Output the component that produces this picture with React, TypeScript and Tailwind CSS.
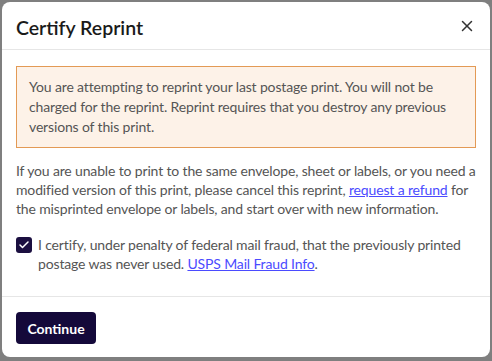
import { X, Check } from 'lucide-react';

export default function App() {
  return (
    <div className="h-[361px] w-[492px] bg-[#7f7f7f] px-[2px] pt-[2px] pb-[4px] font-['Lato',sans-serif]">
      <div className="flex h-full flex-col rounded-lg bg-white">
        {/* header */}
        <div className="flex h-[48px] shrink-0 items-center justify-between border-b border-[#e6e6e6] pl-[14px] pr-[14px]">
          <h2 className="pt-[4px] text-[19.5px] font-semibold text-[#1a1a1a]">Certify Reprint</h2>
          <button className="text-[#333]">
            <X className="h-[18px] w-[18px]" strokeWidth={2} />
          </button>
        </div>

        {/* body */}
        <div className="flex-1 px-[14px] pt-[16px] text-[14px] leading-[20px] tracking-[-0.15px] text-[#555]">
          <div className="border border-[#e39a55] bg-[#fdf2e8] px-[12px] py-[10px]">
            You are attempting to reprint your last postage print. You will not be charged for the reprint. Reprint
            requires that you destroy any previous versions of this print.
          </div>

          <p className="mt-[13px] leading-[19px]">
            If you are unable to print to the same envelope, sheet or labels, or you need a modified version of this
            print, please cancel this reprint,{' '}
            <a href="#" className="text-[#4b4bff] underline">
              request a refund
            </a>{' '}
            for the misprinted envelope or labels, and start over with new information.
          </p>

          <div className="mt-[17px] flex gap-[6px] leading-[19px]">
            <span className="mt-[2px] flex h-[16px] w-[16px] shrink-0 items-center justify-center rounded-[3px] bg-[#1b0f40]">
              <Check className="h-[12px] w-[12px] text-white" strokeWidth={3} />
            </span>
            <span>
              I certify, under penalty of federal mail fraud, that the previously printed postage was never used.{' '}
              <a href="#" className="text-[#4b4bff] underline">
                USPS Mail Fraud Info
              </a>
              .
            </span>
          </div>
        </div>

        {/* footer */}
        <div className="shrink-0 border-t border-[#e6e6e6] px-[14px] pt-[15px] pb-[13px]">
          <button className="h-[32px] w-[80px] rounded-[4px] bg-[#14093a] text-[14px] font-bold text-white">
            Continue
          </button>
        </div>
      </div>
    </div>
  );
}
